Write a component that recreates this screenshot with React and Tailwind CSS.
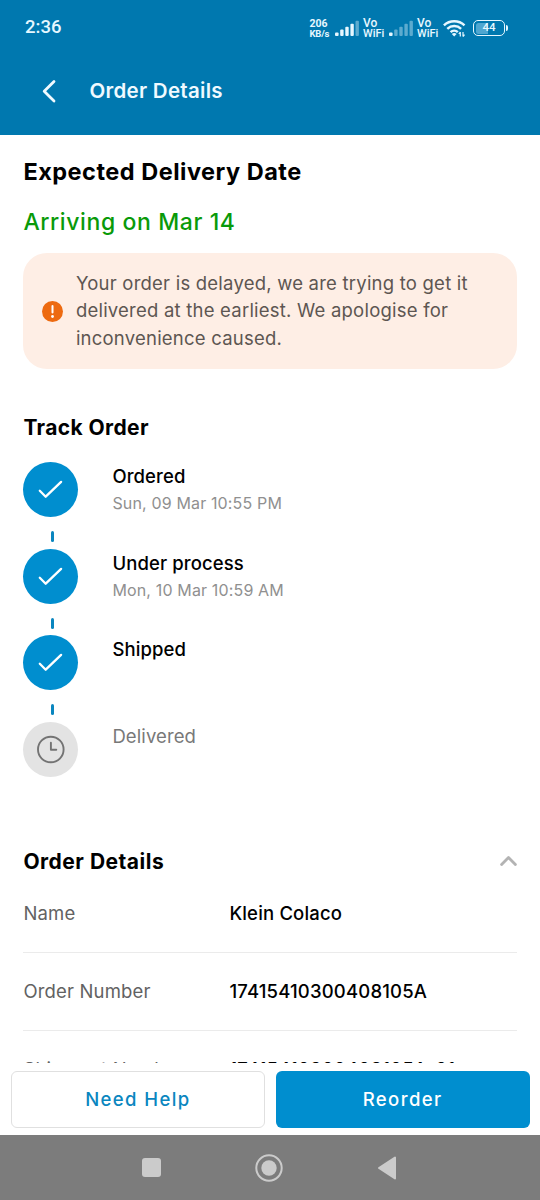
import { clsx } from "clsx";

const steps = [
  { title: "Ordered", date: "Sun, 09 Mar 10:55 PM", done: true },
  { title: "Under process", date: "Mon, 10 Mar 10:59 AM", done: true },
  { title: "Shipped", date: "", done: true },
  { title: "Delivered", date: "", done: false },
];

const details = [
  { label: "Name", value: "Klein Colaco" },
  { label: "Order Number", value: "17415410300408105A" },
  { label: "Shipment Number", value: "17415410300408105A-01" },
];

const SignalIcon = ({ level }) => (
  <svg width="24" height="17" viewBox="0 0 24 17" fill="#e6f7ff">
    <rect x="0" y="12.5" width="3.6" height="3.5" rx="1" />
    <rect x="5.2" y="9.5" width="3.4" height="6.5" rx="1" opacity={level > 1 ? 1 : 0.4} />
    <rect x="10.3" y="6.8" width="3.4" height="9.2" rx="1" opacity={level > 2 ? 1 : 0.4} />
    <rect x="15.4" y="3.8" width="3.4" height="12.2" rx="1" opacity={level > 3 ? 1 : 0.4} />
    <rect x="20.5" y="0.8" width="3.4" height="15.2" rx="1" opacity="0.4" />
  </svg>
);

const VoWifi = () => (
  <div className="w-[22px] font-medium whitespace-nowrap">
    <p className="text-[12px] leading-[11px]">Vo</p>
    <p className="text-[11px] leading-[10px]">WiFi</p>
  </div>
);

const StatusBar = () => (
  <div className="flex h-14 items-center pr-[32px] pl-[25px] font-[Roboto] text-[#e6f7ff]">
    <p className="text-[18.5px] font-medium">2:36</p>
    <div className="ml-auto flex items-center">
      <div className="mr-[5px] w-[20.5px] font-bold whitespace-nowrap">
        <p className="text-[10.5px] leading-[10px]">206</p>
        <p className="text-[9.5px] leading-[9px] tracking-[-0.2px]">KB/s</p>
      </div>
      <SignalIcon level={4} />
      <div className="w-[4px]" />
      <VoWifi />
      <div className="w-[4px]" />
      <SignalIcon level={1} />
      <div className="w-[4px]" />
      <VoWifi />
      <svg className="ml-[4px]" width="23" height="18" viewBox="0 0 23 18" fill="none" stroke="currentColor" strokeWidth="2.5">
        <path d="M0.9 6.3a15.2 15.2 0 0 1 20.6 0" />
        <path d="M4.3 9.8a10.2 10.2 0 0 1 13.8 0" />
        <path d="M7.6 13.1a5.4 5.4 0 0 1 7.2 0" />
        <path d="M11.2 17.4l-2.4-2.4a3.6 3.6 0 0 1 4.8 0z" fill="currentColor" stroke="none" />
        <path d="M17.3 17.6v-4.6M15.8 15l1.5-2 M20 13v4.6M20 17.6l1.5-2" strokeWidth="1.2" />
      </svg>
      <div className="ml-[7px] flex h-[16px] w-[32px] items-center justify-center rounded-[5px] border-[1.5px] border-[#e6f7ff] bg-[linear-gradient(90deg,#4fa6d0_44%,transparent_44%)] bg-clip-content p-[1.5px] text-[11.5px] leading-none font-medium">
        44
      </div>
      <div className="ml-[1px] h-[6px] w-[2px] rounded-r bg-[#e6f7ff]" />
    </div>
  </div>
);

const StepIcon = ({ done }) => (
  <div
    className={clsx(
      "flex size-[55px] items-center justify-center rounded-full",
      done ? "bg-[#008ecf]" : "bg-[#e3e3e3]"
    )}
  >
    {done ? (
      <svg width="55" height="55" viewBox="0 0 55 55" fill="none" stroke="#fff" strokeWidth="2.3" strokeLinecap="round" strokeLinejoin="round">
        <path d="M16.8 28.8l5.9 5.9 15.4-14.8" />
      </svg>
    ) : (
      <svg width="55" height="55" viewBox="0 0 55 55" fill="none" stroke="#737373" strokeWidth="1.9" strokeLinecap="round" strokeLinejoin="round">
        <circle cx="27.8" cy="27.5" r="12.8" />
        <path d="M27.9 20.8v6.9h5.4" />
      </svg>
    )}
  </div>
);

const App = () => {
  return (
    <div className="flex h-[1200px] w-[540px] flex-col overflow-hidden bg-white font-[Inter,sans-serif] text-black">
      <header className="h-[135px] shrink-0 bg-[#0078af]">
        <StatusBar />
        <div className="flex h-[70px] items-center pl-[42px] text-[#f0faff]">
          <svg width="14" height="24" viewBox="0 0 14 24" fill="none" stroke="currentColor" strokeWidth="2.8" strokeLinecap="round" strokeLinejoin="round">
            <path d="M12 2.5L2.2 12.2l9.8 9.7" />
          </svg>
          <h1 className="ml-[33.5px] text-[20.5px] font-semibold tracking-[0.28px]">Order Details</h1>
        </div>
      </header>

      <main className="min-h-0 flex-1 overflow-hidden px-[23.4px]">
        <h2 className="mt-[21px] text-[23.5px] leading-[31px] font-bold tracking-[0.5px]">
          Expected Delivery Date
        </h2>
        <p className="mt-5 text-[23px] leading-[30px] font-medium tracking-[0.6px] text-[#099a09]">
          Arriving on Mar 14
        </p>
        <div className="mt-4 flex h-[116px] items-center rounded-[24px] bg-[#feeee5] pl-[18.5px]">
          <svg width="21" height="21" viewBox="0 0 21 21">
            <circle cx="10.5" cy="10.5" r="10.5" fill="#ed6a10" />
            <path d="M10.5 5v6.5" stroke="#fff" strokeWidth="2" strokeLinecap="round" />
            <circle cx="10.5" cy="15.5" r="1.4" fill="#fff" />
          </svg>
          <p className="ml-[13px] text-[18.5px] leading-[27.5px] tracking-[0.22px] whitespace-nowrap text-[#5d5652]">
            Your order is delayed, we are trying to get it
            <br />
            delivered at the earliest. We apologise for
            <br />
            inconvenience caused.
          </p>
        </div>

        <h2 className="mt-[44px] text-[21px] leading-[30px] font-bold tracking-[0.38px]">
          Track Order
        </h2>
        <div className="mt-[19px]">
          {steps.map((step, index) => (
            <div key={step.title} className="flex h-[86.5px]">
              <div className="w-[55px]">
                <StepIcon done={step.done} />
                {index < steps.length - 1 && (
                  <div className="mt-[14px] ml-[27.5px] h-[11px] w-[3px] rounded-full bg-[#0a86bf]" />
                )}
              </div>
              <div className="ml-[34px]">
                <p
                  className={clsx(
                    "text-[18.5px] leading-[28px] tracking-[0.1px]",
                    step.done ? "font-medium" : "text-[#787878]"
                  )}
                >
                  {step.title}
                </p>
                <p className="text-[16px] leading-[27px] tracking-[0.15px] text-[#909090]">
                  {step.date}
                </p>
              </div>
            </div>
          ))}
        </div>

        <div className="mt-[39px] flex items-center justify-between">
          <h2 className="text-[21px] leading-[30px] font-bold tracking-[0.5px]">
            Order Details
          </h2>
          <svg className="-mt-[2px]" width="17" height="12" viewBox="0 0 17 12" fill="none" stroke="#b3b3b3" strokeWidth="2.8" strokeLinecap="round" strokeLinejoin="round">
            <path d="M1.6 9.6L8.5 2.6l6.9 7" />
          </svg>
        </div>
        <div className="-mt-[2px]">
          {details.map((item) => (
            <div
              key={item.label}
              className="flex h-[78px] items-center border-b-[1.5px] border-[#ebebeb] text-[18.5px] tracking-[0.17px] whitespace-nowrap"
            >
              <p className="w-[206px] text-[#626262]">{item.label}</p>
              <p className="font-medium">{item.value}</p>
            </div>
          ))}
        </div>
      </main>

      <footer className="flex h-[72px] shrink-0 gap-[11px] bg-white pt-[8px] pr-[10.5px] pb-[7px] pl-[11px] text-[18.5px] font-medium tracking-[1.4px]">
        <button className="w-1/2 rounded-[6px] border border-[#e0e0e0] text-[#0a86bf]">
          Need Help
        </button>
        <button className="w-1/2 rounded-[6px] bg-[#008ecf] text-white">Reorder</button>
      </footer>

      <nav className="flex h-[65px] shrink-0 items-center bg-[#7c7c7c] pl-[141.5px]">
        <div className="size-[19.5px] rounded-[3px] bg-[#cbcbcb]" />
        <svg className="ml-[94px]" width="28" height="28" viewBox="0 0 28 28">
          <circle cx="14" cy="14" r="12.7" fill="none" stroke="#cbcbcb" strokeWidth="2" />
          <circle cx="14" cy="14" r="7.7" fill="#cbcbcb" />
        </svg>
        <svg className="ml-[94px]" width="20" height="24" viewBox="0 0 20 24" fill="#cbcbcb" stroke="#cbcbcb" strokeWidth="2" strokeLinejoin="round">
          <path d="M18 1.5v21L2 12z" />
        </svg>
      </nav>
    </div>
  );
};

export default App;
